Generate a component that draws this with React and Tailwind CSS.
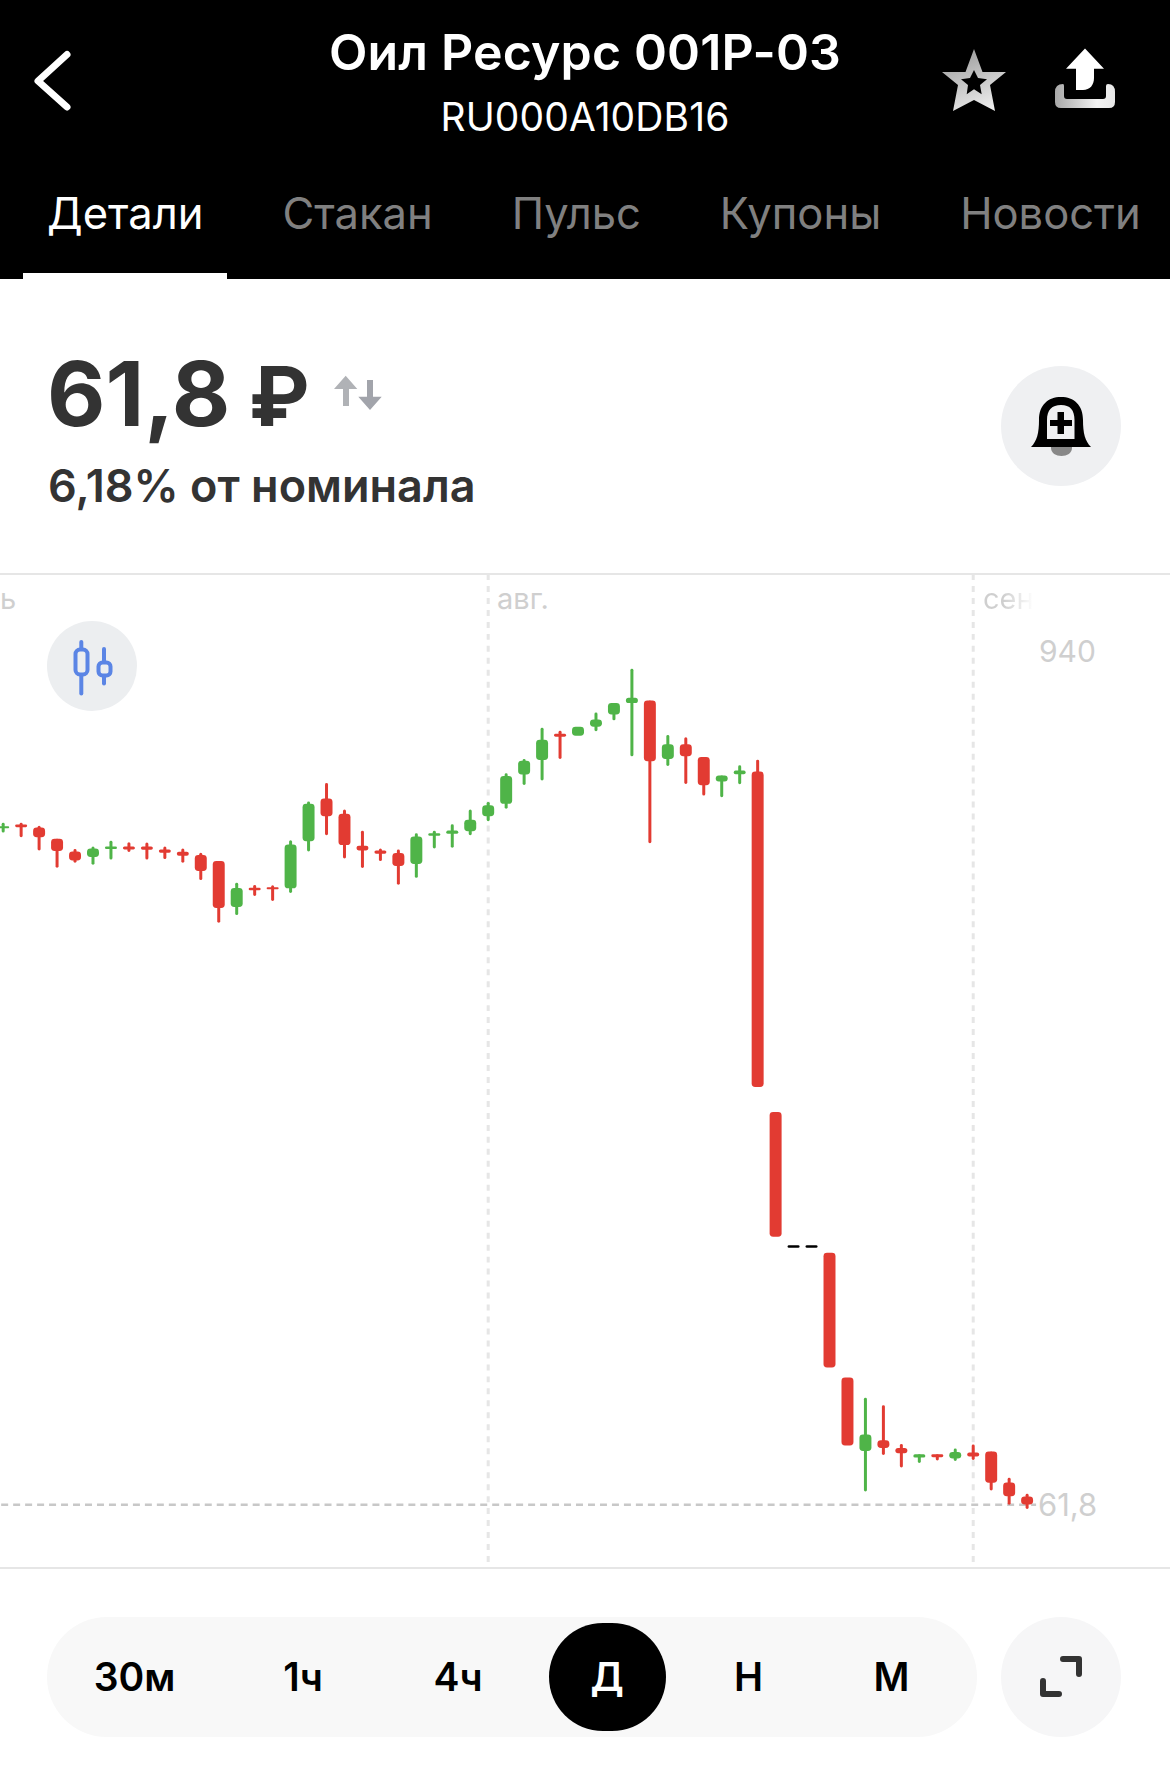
const RED = "#e23b32";
const GREEN = "#4fb448";

const a = [
  [2, "g", 517, 527, 533, 546], [20, "r", 517, 522, 530, 560], [38, "r", 526, 531, 560, 600],
  [56, "r", 565, 565, 602, 652], [74, "r", 596, 603, 630, 637], [92, "g", 588, 594, 620, 643],
  [110, "g", 571, 588, 596, 627], [128, "r", 575, 588, 597, 605], [146, "r", 576, 588, 598, 627],
  [164, "r", 588, 597, 607, 626], [182, "r", 594, 604, 616, 637], [200, "r", 607, 614, 662, 689],
  [218, "r", 632, 632, 773, 817], [236, "g", 697, 713, 770, 794], [254, "r", 704, 712, 720, 737],
  [272, "r", 705, 711, 717, 752], [290, "g", 569, 582, 714, 728], [308, "g", 453, 460, 572, 603],
  [326, "r", 397, 444, 497, 554], [344, "r", 477, 490, 584, 624], [362, "r", 541, 586, 600, 653],
  [380, "r", 594, 600, 610, 632], [398, "r", 597, 608, 647, 703], [416, "g", 548, 558, 641, 682],
  [434, "g", 541, 548, 556, 594], [452, "g", 521, 540, 550, 592], [470, "g", 477, 508, 542, 554],
  [488, "g", 454, 464, 497, 512], [506, "g", 368, 376, 460, 475], [524, "g", 325, 330, 372, 403],
  [542, "g", 231, 267, 328, 390], [560, "r", 240, 249, 258, 325], [578, "g", 228, 228, 255, 255],
  [596, "g", 185, 206, 228, 242], [614, "g", 157, 157, 191, 209], [632, "g", 54, 141, 157, 317],
  [650, "r", 149, 149, 332, 578], [668, "g", 253, 281, 325, 346], [686, "r", 260, 281, 317, 400],
  [704, "r", 319, 319, 404, 435], [722, "g", 375, 375, 393, 440], [740, "g", 344, 360, 371, 401],
].map(([x, c, p, q, r, s]) => [x, c, 650 + p / 3, 650 + q / 3, 650 + r / 3, 650 + s / 3]);

const b = [
  [848, "r", 24, 24, 229, 229], [866, "g", 85, 196, 245, 367], [884, "r", 108, 213, 236, 257],
  [902, "r", 224, 236, 252, 295], [920, "g", 255, 255, 265, 281], [938, "r", 255, 255, 264, 274],
  [956, "g", 238, 248, 268, 275], [974, "r", 226, 250, 262, 272], [992, "r", 247, 247, 341, 364],
  [1010, "r", 326, 340, 381, 407], [1028, "r", 374, 382, 406, 420],
].map(([x, c, p, q, r, s]) => [x, c, 1370 + p / 3, 1370 + q / 3, 1370 + r / 3, 1370 + s / 3]);

const candles = [
  ...a,
  [758, "r", 759, 771, 1087, 1087],
  [776, "r", 1112, 1112, 1237, 1237],
  [830, "r", 1253, 1253, 1368, 1368],
  ...b,
];

function Candle({ x, c, wt, bt, bb, wb }) {
  const color = c === "r" ? RED : GREEN;
  const h = bb - bt;
  return (
    <g fill={color}>
      {wb - wt > h + 0.5 && <rect x={x - 1.5} y={wt} width={3} height={wb - wt} rx={1.5} />}
      <rect x={x - 6} y={bt} width={12} height={h} rx={Math.min(3.5, h / 2)} ry={Math.min(3.5, h / 2)} />
    </g>
  );
}

function Chart() {
  return (
    <svg viewBox="0 574 1170 994" className="block w-full h-full">
      <g stroke="#e6e6e6" strokeWidth="3" strokeDasharray="6 6">
        <line x1="488" y1="573" x2="488" y2="1563" />
        <line x1="974" y1="573" x2="974" y2="1563" />
      </g>
      <line x1="0" y1="1505.7" x2="1037" y2="1505.7" stroke="#c8c8c8" strokeWidth="2.5" strokeDasharray="7 5" />
      {candles.map(([x, c, wt, bt, bb, wb]) => (
        <Candle key={x} x={x} c={c} wt={wt} bt={bt} bb={bb} wb={wb} />
      ))}
      <rect x="788" y="1245.5" width="12" height="2.6" rx="1.3" fill="#000" />
      <rect x="806" y="1245.5" width="12" height="2.6" rx="1.3" fill="#000" />
    </svg>
  );
}

function Back() {
  return (
    <svg viewBox="30 46 44 70" className="w-[44px] h-[70px]">
      <path d="M67 54.5 L38 81 L67 107" fill="none" stroke="#fff" strokeWidth="7" strokeLinecap="round" strokeLinejoin="round" />
    </svg>
  );
}

function Star() {
  return (
    <svg viewBox="938 46 72 68" className="w-[72px] h-[68px]">
      <defs>
        <linearGradient id="st" x1="0.3" y1="0" x2="0.7" y2="1">
          <stop offset="0" stopColor="#9c9c9c" />
          <stop offset="1" stopColor="#efefef" />
        </linearGradient>
      </defs>
      <path
        fillRule="evenodd"
        fill="url(#st)"
        d="M974 49 L982.5 72 H1006 L990 85 L995 111 L974 100 L953 111 L958 85 L942 72 H965.5 Z M974 70 L970 78 L961 79.3 L968 85 L966.7 94.3 L974 89.3 L981.7 94.3 L980 85 L987 79.3 L978 78 Z"
      />
    </svg>
  );
}

function Share() {
  return (
    <svg viewBox="1052 46 66 64" className="w-[66px] h-[64px]">
      <defs>
        <linearGradient id="tr" x1="0" y1="0" x2="1" y2="0">
          <stop offset="0" stopColor="#a8a8a8" />
          <stop offset="0.7" stopColor="#f2f2f2" />
          <stop offset="1" stopColor="#e8e8e8" />
        </linearGradient>
      </defs>
      <path fill="#fff" d="M1085 48.5 L1104 68.7 H1094 V78 C1094 85 1090 90 1083 90 H1076 V68.7 H1066 Z" />
      <path
        fill="url(#tr)"
        d="M1055 92 Q1055 84 1063 84 Q1064 84 1064 86 V96 Q1064 99 1067 99 H1103 Q1106 99 1106 96 V86 Q1106 84 1108 84 Q1115 84 1115 92 V102 Q1115 108 1109 108 H1061 Q1055 108 1055 102 Z"
      />
    </svg>
  );
}

function Bell() {
  return (
    <svg viewBox="1001 366 120 120" className="w-[120px] h-[120px]">
      <path fill="#888" d="M1051 447 H1072 V448 C1072 453 1067 456 1061.5 456 C1056 456 1051 453 1051 448 Z" />
      <path
        fillRule="evenodd"
        fill="#000"
        d="M1031 447 C1037 441 1039 433 1039 420 C1039 405 1048 397 1061 397 C1074 397 1083 405 1083 420 C1083 433 1085 441 1091 447 Z M1047 439 H1074.5 V420 C1074.5 410 1070 405 1061 405 C1052 405 1047 410 1047 420 Z"
      />
      <path fill="#000" d="M1057.5 412 H1064 V420 H1072 V426 H1064 V434 H1057.5 V426 H1050 V420 H1057.5 Z" />
    </svg>
  );
}

function PriceArrows() {
  return (
    <svg viewBox="333 373 52 40" className="w-[52px] h-[40px]">
      <path fill="#b0b2b6" d="M346.7 375.7 L358.3 389 H350 V406 H344 V389 H335 Z" />
      <path fill="#a2a4ab" d="M368 380 H374 V396.7 H382.7 L371 410 L359.3 396.7 H368 Z" />
    </svg>
  );
}

function CandleIcon() {
  return (
    <svg viewBox="47 621 90 90" className="w-[90px] h-[90px]">
      <g fill="none" stroke="#5b85e5" strokeWidth="4" strokeLinecap="round">
        <rect x="75.5" y="649.5" width="12" height="25" rx="4.5" />
        <line x1="81.3" y1="642" x2="81.3" y2="649" />
        <line x1="81.3" y1="675" x2="81.3" y2="693.5" />
        <rect x="98.5" y="662.5" width="12" height="13" rx="4" />
        <line x1="104" y1="649" x2="104" y2="662" />
        <line x1="104" y1="676" x2="104" y2="683.5" />
      </g>
    </svg>
  );
}

function Expand() {
  return (
    <svg viewBox="1036 1652 50 50" className="w-[50px] h-[50px]">
      <g fill="none" stroke="#333" strokeWidth="6" strokeLinecap="round" strokeLinejoin="round">
        <path d="M1063 1659 H1079 V1674" />
        <path d="M1043 1681 V1694 H1059" />
      </g>
    </svg>
  );
}

const ranges = [
  { t: "30м", w: "w-[175px]" },
  { t: "1ч", w: "w-[162px]" },
  { t: "4ч", w: "w-[148px]" },
  { t: "Д", w: "w-[150px]", active: true },
  { t: "Н", w: "w-[133px]" },
  { t: "М", w: "w-[153px]" },
];

export default function App() {
  return (
    <div className="w-[1170px] h-[1766px] bg-white overflow-hidden font-['Inter',sans-serif] antialiased">
      <header className="bg-black h-[279px] flex flex-col">
        <div className="grid grid-cols-[1fr_auto_1fr] items-center h-[162px] px-[52px]">
          <div className="flex items-center justify-start -ml-[22px]">
            <Back />
          </div>
          <div className="flex flex-col items-center">
            <div className="text-white text-[50px] leading-[56px] font-semibold tracking-[0.15px] whitespace-nowrap">Оил Ресурс 001Р-03</div>
            <div className="text-white text-[39px] leading-[44px] mt-[15px] tracking-[0.1px]">RU000A10DB16</div>
          </div>
          <div className="flex items-start justify-end gap-[42px] mb-[2px]">
            <Star />
            <Share />
          </div>
        </div>
        <nav className="flex-1 flex items-stretch pl-[23px] gap-[31px] text-[43.5px] leading-[52px]">
          <div className="px-[24px] pt-[25px] border-b-[6px] border-white text-white">Детали</div>
          <div className="px-[24px] pt-[25px] text-[#808080]">Стакан</div>
          <div className="px-[24px] pt-[25px] text-[#808080]">Пульс</div>
          <div className="px-[24px] pt-[25px] text-[#808080]">Купоны</div>
          <div className="px-[24px] pt-[25px] text-[#808080] whitespace-nowrap">Новости</div>
        </nav>
      </header>

      <section className="h-[294px] flex items-center justify-between pl-[47px] pr-[49px]">
        <div className="flex flex-col pt-[3px]">
          <div className="flex items-center">
            <span className="text-[#333] text-[90px] leading-[100px] font-bold">61,8 <span className="text-[82px] -ml-[3px]">₽</span></span>
            <span className="ml-[23px] mb-[4px] flex"><PriceArrows /></span>
          </div>
          <div className="text-[#333] text-[45px] leading-[52px] font-semibold mt-[13px] ml-[1px]">6,18% от номинала</div>
        </div>
        <div className="w-[120px] h-[120px] rounded-full bg-[#eff0f2] flex items-center justify-center">
          <Bell />
        </div>
      </section>

      <section className="relative h-[996px] border-y-2 border-[#e6e6e6] overflow-hidden">
        <Chart />
        <span className="absolute left-0 top-[8px] text-[29px] leading-[32px] text-[#cfcfcf]">ь</span>
        <span className="absolute left-[497px] top-[8px] text-[29px] leading-[32px] text-[#cfcfcf]">авг.</span>
        <span className="absolute left-[983px] top-[8px] whitespace-nowrap text-[29px] leading-[32px] text-transparent bg-gradient-to-r from-[#cfcfcf] from-40% to-white bg-clip-text">сен</span>
        <span className="absolute left-[1039px] top-[58px] text-[30px] leading-[36px] text-[#cfcfcf]">940</span>
        <span className="absolute left-[1038px] top-[912px] text-[31px] leading-[36px] text-[#cfcfcf]">61,8</span>
        <div className="absolute left-[47px] top-[46px] w-[90px] h-[90px] rounded-full bg-[#eceef0] flex items-center justify-center">
          <CandleIcon />
        </div>
      </section>

      <section className="flex items-center justify-between pl-[47px] pr-[49px] pt-[48px]">
        <div className="flex items-center w-[930px] h-[120px] rounded-full bg-[#f8f8f8] text-[39px] font-semibold text-black">
          {ranges.map((r) => (
            <div key={r.t} className={`${r.w} flex items-center justify-center`}>
              {r.active ? (
                <div className="w-[117px] h-[108px] rounded-full bg-black text-white flex items-center justify-center">{r.t}</div>
              ) : (
                r.t
              )}
            </div>
          ))}
        </div>
        <div className="w-[120px] h-[120px] rounded-full bg-[#f6f6f7] flex items-center justify-center">
          <Expand />
        </div>
      </section>
    </div>
  );
}
